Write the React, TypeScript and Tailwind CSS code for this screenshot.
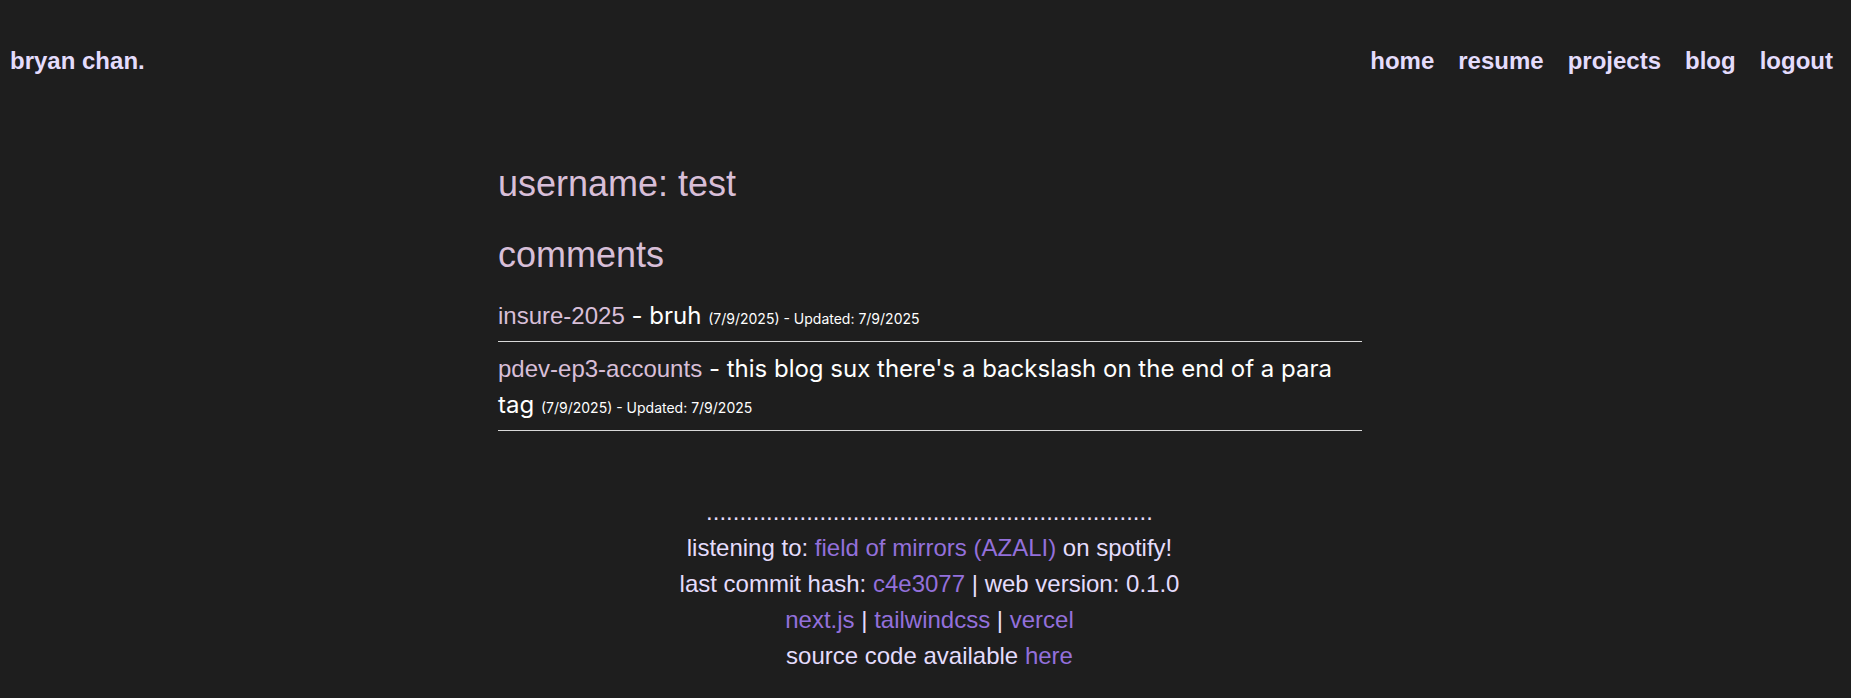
const arial = "font-['Liberation_Sans',Arial,sans-serif]"
const inter = "font-['Inter','Liberation_Sans',sans-serif]"

type Comment = { slug: string; body: string; created: string; updated: string }

const comments: Comment[] = [
  { slug: 'insure-2025', body: 'bruh', created: '7/9/2025', updated: '7/9/2025' },
  {
    slug: 'pdev-ep3-accounts',
    body: "this blog sux there's a backslash on the end of a para tag",
    created: '7/9/2025',
    updated: '7/9/2025',
  },
]

const navLinks = ['home', 'resume', 'projects', 'blog', 'logout']

function Link({ children }: { children: React.ReactNode }) {
  return <a href="#" className="text-[#9370db]">{children}</a>
}

export default function App() {
  return (
    <div className={`min-h-screen bg-[#1e1e1e] pb-6 ${arial}`}>
      {/* Header */}
      <header className="flex items-center justify-between pl-[10px] pr-[18px] pt-[45px] text-2xl font-bold text-[#e4dcfc]">
        <a href="#">bryan chan.</a>
        <nav className="flex gap-6">
          {navLinks.map(l => (
            <a key={l} href="#">{l}</a>
          ))}
        </nav>
      </header>

      {/* Profile */}
      <main className="flex justify-center pl-[9px] pt-[87px]">
        <div className="w-[864px]">
          <h1 className="text-4xl text-[#d8bfd8]">username: test</h1>
          <h2 className="mt-[31px] text-4xl text-[#d8bfd8]">comments</h2>
          <div className="mt-[14px]">
            {comments.map(c => (
              <div key={c.slug} className="border-b border-[#d9d9d9] pb-[7px] pt-[9px] text-2xl leading-9 text-white">
                <a href="#" className={`${arial} text-[#d8bfd8]`}>{c.slug}</a>
                <span className={inter}> - {c.body} </span>
                <span className={`${inter} text-sm leading-none`}>({c.created}) - Updated: {c.updated}</span>
              </div>
            ))}
          </div>
        </div>
      </main>

      {/* Footer */}
      <footer className="mt-[63px] pl-2 text-center text-2xl leading-9 text-[#e4dcfc]">
        <p>{'.'.repeat(67)}</p>
        <p>listening to: <Link>field of mirrors (AZALI)</Link> on spotify!</p>
        <p>last commit hash: <Link>c4e3077</Link> | web version: 0.1.0</p>
        <p><Link>next.js</Link> | <Link>tailwindcss</Link> | <Link>vercel</Link></p>
        <p>source code available <Link>here</Link></p>
      </footer>
    </div>
  )
}
